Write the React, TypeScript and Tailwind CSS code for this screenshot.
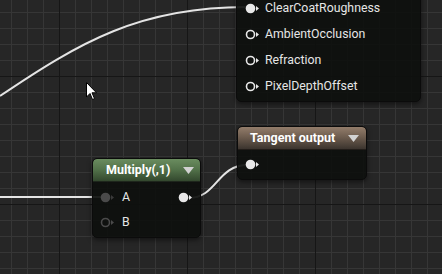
import React from "react";

const W = 442;
const H = 274;

function Pin({ kind }: { kind: "filled" | "hollow" | "dimFilled" | "dimHollow" }) {
  const light = "#e8e8e8";
  const dim = "#4a4a4a";
  const color = kind === "filled" || kind === "hollow" ? light : dim;
  const filled = kind === "filled" || kind === "dimFilled";
  return (
    <svg width="15" height="11" viewBox="0 0 15 11" className="shrink-0 block">
      {filled ? (
        <circle cx="5.5" cy="5.5" r="4.8" fill={color} />
      ) : (
        <circle cx="5.5" cy="5.5" r="4" fill="none" stroke={color} strokeWidth="1.6" />
      )}
      <polygon points="11,3 14,5.5 11,8" fill={kind === "dimFilled" ? "#3a3a3a" : color} />
    </svg>
  );
}

function Caret() {
  return (
    <svg width="11" height="7" viewBox="0 0 11 7" className="block shrink-0">
      <polygon points="0,0 11,0 5.5,7" fill="#d2d2d2" />
    </svg>
  );
}

function Grid() {
  const minorX: number[] = [];
  const minorY: number[] = [];
  for (let x = 11; x < W; x += 16) minorX.push(x);
  for (let y = 12; y < H; y += 16) minorY.push(y);
  const majorX = [59, 187, 315];
  const majorY = [76, 204];
  return (
    <>
      {minorX.map((x) => (
        <rect key={"vx" + x} x={x} y={0} width={1} height={H} fill="#363636" />
      ))}
      {minorY.map((y) => (
        <rect key={"hy" + y} x={0} y={y} width={W} height={1} fill="#363636" />
      ))}
      {majorX.map((x) => (
        <rect key={"mx" + x} x={x} y={0} width={1} height={H} fill="#161616" />
      ))}
      {majorY.map((y) => (
        <rect key={"my" + y} x={0} y={y} width={W} height={1} fill="#161616" />
      ))}
    </>
  );
}

export default function App() {
  const font = { fontFamily: "Roboto, 'Noto Sans', sans-serif" } as React.CSSProperties;
  return (
    <div
      className="relative w-[442px] h-[274px] overflow-hidden bg-[#262626] text-[12.3px] text-[#e6e6e6]"
      style={font}
    >
      <svg className="absolute inset-0" width={W} height={H} viewBox={`0 0 ${W} ${H}`}>
        <Grid />
        <path d="M 0 96 C 80 42, 140 7, 246 7" fill="none" stroke="#e4e4e4" strokeWidth="2" />
        <path d="M 0 197 L 104 197" fill="none" stroke="#e4e4e4" strokeWidth="2" />
        <path d="M 188 198 C 218 198, 216 165, 248 165" fill="none" stroke="#e4e4e4" strokeWidth="2" />
      </svg>

      {/* Main material node */}
      <div className="absolute left-[236px] top-[-30px] w-[185px] pt-[24px] pb-[2px] rounded-[5px] bg-[rgba(14,16,14,0.93)] border border-[#0b0b0b] shadow-[0_2px_5px_rgba(0,0,0,0.5)]">
        {["ClearCoatRoughness", "AmbientOcclusion", "Refraction", "PixelDepthOffset"].map((label, i) => (
          <div key={label} className="flex items-center h-[26px] pl-[8px]">
            <Pin kind={i === 0 ? "filled" : "hollow"} />
            <span className="ml-[5px] leading-none">{label}</span>
          </div>
        ))}
      </div>

      {/* Multiply node */}
      <div className="absolute left-[92px] top-[158px] w-[109px] h-[80px] flex flex-col rounded-[5px] bg-[rgba(14,16,14,0.93)] border border-[#0b0b0b] shadow-[0_2px_5px_rgba(0,0,0,0.5)] overflow-hidden">
        <div className="h-[23px] flex items-center justify-between pl-[13px] pr-[6px] rounded-t-[4px] bg-[linear-gradient(180deg,#6a8c5f_0%,#54744b_45%,#33482e_100%)] border-b border-[#1e261c]">
          <span className="font-bold text-white text-[12.5px] leading-none">Multiply(,1)</span>
          <Caret />
        </div>
        <div className="flex flex-col pt-[3px]">
          <div className="flex items-center justify-between h-[25px] pl-[7px] pr-[7px]">
            <div className="flex items-center">
              <Pin kind="dimFilled" />
              <span className="ml-[7px] leading-none">A</span>
            </div>
            <Pin kind="filled" />
          </div>
          <div className="flex items-center h-[25px] pl-[7px]">
            <Pin kind="dimHollow" />
            <span className="ml-[7px] leading-none">B</span>
          </div>
        </div>
      </div>

      {/* Tangent output node */}
      <div className="absolute left-[237px] top-[126px] w-[130px] h-[54px] flex flex-col rounded-[5px] bg-[rgba(14,16,14,0.93)] border border-[#0b0b0b] shadow-[0_2px_5px_rgba(0,0,0,0.5)] overflow-hidden">
        <div className="h-[23px] flex items-center justify-between pl-[12px] pr-[7px] rounded-t-[4px] bg-[linear-gradient(180deg,#937d6b_0%,#6e5d4f_45%,#3b342e_100%)] border-b border-[#221d19]">
          <span className="font-bold text-white text-[12.5px] leading-none">Tangent output</span>
          <Caret />
        </div>
        <div className="flex items-center flex-1 pl-[7px]">
          <Pin kind="filled" />
        </div>
      </div>

      {/* Mouse cursor */}
      <svg className="absolute left-[86px] top-[82px]" width="12" height="19" viewBox="0 0 12 19">
        <polygon
          points="0.5,0.5 0.5,15 4,11.5 6.5,17.5 8.5,16.6 6,10.8 10.5,10.8"
          fill="#ffffff"
          stroke="#000000"
          strokeWidth="1"
          strokeLinejoin="round"
        />
      </svg>
    </div>
  );
}
